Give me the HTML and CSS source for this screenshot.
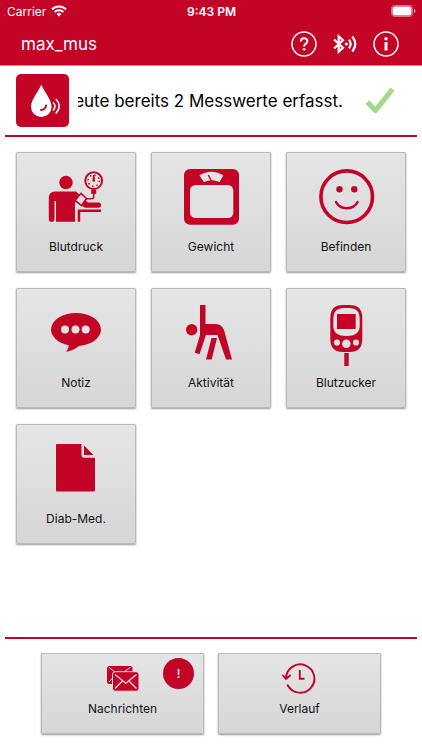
FILE: index.html
```html
<!DOCTYPE html>
<html lang="de">
<head>
<meta charset="utf-8">
<meta name="viewport" content="width=device-width, initial-scale=1">
<title>max_mus</title>
<link rel="stylesheet" href="styles.css">
</head>
<body>
<header class="header">
  <div class="status">
    <div class="carrier">Carrier
      <svg width="16" height="12" viewBox="0 0 16 12" fill="none" stroke="#fff" stroke-width="2"><path d="M1 4.3a10 10 0 0 1 14 0M3.6 7a6.4 6.4 0 0 1 8.8 0"/><path d="M5.6 9a3.5 3.5 0 0 1 4.800 0L8 11.4z" fill="#fff" stroke="none"/></svg>
    </div>
    <div class="clock">9:43 PM</div>
    <div class="battery">
      <svg width="25" height="12" viewBox="0 0 25 12"><rect x=".5" y=".5" width="21" height="11" rx="3" fill="none" stroke="#e0788a"/><rect x="1.500" y="1.500" width="19" height="9" rx="2" fill="#fff"/><path d="M23 4v4q1.500-.6 1.500-2T23 4" fill="#eda0ad"/></svg>
    </div>
  </div>
  <div class="titlebar">
    <h1 class="user">max_mus</h1>
    <button class="tool" aria-label="Hilfe"><svg width="26" height="26" viewBox="0 0 26 26" fill="none" stroke="#fff"><circle cx="13" cy="13" r="12" stroke-width="1.500"/><path d="M9.800 10.500c0-4.300 6.600-4.300 6.600-.3 0 2.500-3.300 2.400-3.300 5.300" stroke-width="2"/><circle cx="13.100" cy="18.300" r="1.300" fill="#fff" stroke="none"/></svg></button>
    <button class="tool" aria-label="Bluetooth"><svg width="26" height="26" viewBox="0 0 26 26" fill="none" stroke="#fff" stroke-width="2.200"><path d="M2 8.500l9 8.300-4.300 4V5.200l4.300 4-9 8.300"/><circle cx="14.300" cy="13" r="1.500" fill="#fff" stroke="none"/><path d="M17 8.800q3.300 4.200 0 8.400M20.300 5.500q6 7.500 0 15"/></svg></button>
    <button class="tool" aria-label="Information"><svg width="26" height="26" viewBox="0 0 26 26" fill="none" stroke="#fff"><circle cx="13" cy="13" r="12" stroke-width="1.500"/><circle cx="13" cy="7.800" r="1.700" fill="#fff" stroke="none"/><path d="M13 11v8.500" stroke-width="3"/></svg></button>
  </div>
</header>

<section class="summary">
  <svg class="drop" width="53" height="53" viewBox="0 0 53 53"><rect width="53" height="53" rx="5" fill="#c30427"/><path d="M25.300 10.500C23 17 15 25.500 15 32.700a10.300 10.300 0 0 0 20.600 0C35.600 25.500 27.600 17 25.300 10.500z" fill="#fff"/><path d="M25 36q4.500-.3 5-4.500" fill="none" stroke="#c30427" stroke-width="2" stroke-linecap="round"/><path d="M37 28.500q4 3.500 0 8M39.800 25q7 7 0 14.500" fill="none" stroke="#fff" stroke-width="1.600"/></svg>
  <p class="ticker">eute bereits 2 Messwerte erfasst.</p>
  <svg class="check" width="30" height="30" viewBox="0 0 30 30" fill="none" stroke="#a5d887" stroke-width="5.200" stroke-linejoin="round"><path d="M2.300 16l8.200 8.500L27.500 3"/></svg>
</section>

<main class="tiles">
  <button class="tile">
    <svg width="60" height="68" viewBox="0 0 60 68" fill="#c30427"><circle cx="20" cy="18.500" r="6.700"/><path d="M9 27.500h21L42 38.500h10.500a2.600 2.600 0 0 1 0 5.200H39L29 37.500V57.700H10V37H8.500V55a2.800 2.800 0 0 1-5.700 0V34q0-6.500 6.200-6.500z"/><path d="M35 29.300l5.500 5.200-5 7-6.300-5.200z" fill="#e0e0e0" stroke="#c30427" stroke-width="1.600"/><path d="M31.700 57.700V45.500H55V48H34.200v9.700z"/><circle cx="47.700" cy="16.700" r="8.400" fill="#e2e2e2" stroke="#c30427" stroke-width="2"/><circle cx="47.700" cy="16.700" r="5.600" fill="none" stroke="#c30427" stroke-width="1.600" stroke-dasharray="1.400 3"/><path d="M47 11h1.500l.6 6.500h-2.700zM45.200 25.500h5V30h-5z"/><path d="M47.700 29v4q0 1.700-2 1.700H40" fill="none" stroke="#c30427" stroke-width="1.500"/></svg>
    <span>Blutdruck</span>
  </button>
  <button class="tile">
    <svg width="60" height="68" viewBox="0 0 60 68" fill="#c30427"><rect x="3" y="5" width="55" height="55.700" rx="6"/><rect x="9" y="21" width="43.300" height="33" rx="5.500" fill="#e1e1e1"/><path d="M18.300 11.500q12-7.500 24 0L38.500 18q-7.800-3.500-15.500 0z" fill="#e3e3e3"/><path d="M27.300 11l3 6" stroke="#c30427" stroke-width="1.400"/></svg>
    <span>Gewicht</span>
  </button>
  <button class="tile">
    <svg width="60" height="68" viewBox="0 0 60 68" fill="none" stroke="#c30427"><circle cx="30.700" cy="32.700" r="25.800" stroke-width="3.600"/><path d="M20 38c4 8.200 17.600 8.200 21.600 0" stroke-width="2.500" stroke-linecap="round"/><g fill="#c30427" stroke="none"><circle cx="23.500" cy="25.300" r="3.200"/><circle cx="38.300" cy="25.300" r="3.200"/></g></svg>
    <span>Befinden</span>
  </button>
  <button class="tile">
    <svg width="60" height="68" viewBox="0 0 60 68" fill="#c30427"><ellipse cx="30" cy="29.500" rx="25" ry="16.500"/><path d="M22.500 43q1 4-2.300 9Q29 50 34 45z"/><g fill="#e3e3e3"><circle cx="19" cy="29.500" r="4"/><circle cx="29.500" cy="29.500" r="4"/><circle cx="39.700" cy="29.500" r="4"/></g></svg>
    <span>Notiz</span>
  </button>
  <button class="tile">
    <svg width="60" height="68" viewBox="0 0 60 68" fill="#c30427"><circle cx="10.700" cy="29.700" r="5.700"/><path d="M19 5h5.500v19H35q5.500 0 8 6L51 59.500h-6L36.500 35H25l-6.500 19.300-4.800-1.500L19 35z"/><path d="M30.500 38H36l-5.300 21.500H25z"/></svg>
    <span>Aktivität</span>
  </button>
  <button class="tile">
    <svg width="60" height="68" viewBox="0 0 60 68" fill="#c30427"><path d="M14.300 18Q14.300 5 27 5h6.600Q46.300 5 46.300 18v21q0 13-12.700 13H27Q14.300 52 14.300 39z"/><path d="M17.300 19Q17.300 8 28 8h5Q43.700 8 43.700 19v7q0 10-13.200 10T17.300 26z" fill="#e2e2e2"/><path d="M21 14h18.700v15H21zM28.300 53h4.400v13h-4.400z"/><g fill="#dfdfdf"><circle cx="21" cy="42.500" r="3.100"/><circle cx="30.300" cy="43.800" r="4.300"/><circle cx="40" cy="42.500" r="3.100"/></g></svg>
    <span>Blutzucker</span>
  </button>
  <button class="tile">
    <svg width="60" height="68" viewBox="0 0 60 68" fill="#c30427"><path d="M11 8h24.500v10.500q0 3.200 3 3.200H49V54.500q0 1-1 1H11q-1 0-1-1V9q0-1 1-1z"/><path d="M38 9.500l9.500 9.500H38z"/></svg>
    <span>Diab-Med.</span>
  </button>
</main>

<footer class="footer">
  <button class="wide">
    <svg width="36" height="34" viewBox="0 0 36 34"><rect x="2" y="6" width="25.500" height="18" rx="2.500" fill="#c30427"/><path d="M4 7.500l6 4.500M4 22l3.500-4M25.500 7.500L20 11" stroke="#dfdfdf"/><rect x="7.500" y="11.700" width="26.500" height="19.500" rx="2.800" fill="#c30427" stroke="#dfdfdf"/><path d="M10 14.500l10.800 8.800L31.500 14.500M10 28.500l7.500-7.500M31.500 28.500L24 21" fill="none" stroke="#e2e2e2" stroke-width="1.200"/></svg>
    <span>Nachrichten</span>
    <b class="badge">!</b>
  </button>
  <button class="wide">
    <svg width="36" height="34" viewBox="0 0 36 34" fill="none" stroke="#c30427" stroke-width="1.900" stroke-linecap="round"><path d="M5.700 25.300A14.200 14.200 0 1 0 4 18.500M1 15.500l3 3.500 4-3.500"/><path d="M17.800 10v8.700h4.700" stroke-linecap="butt"/></svg>
    <span>Verlauf</span>
  </button>
</footer>
</body>
</html>
```
FILE: styles.css
```css
* { box-sizing: border-box; }

body {
  margin: 0;
  min-height: 100vh;
  display: flex;
  flex-direction: column;
  background: #fff;
  color: #111;
  font-family: Inter, "Liberation Sans", sans-serif;
}

button {
  font: inherit;
  color: inherit;
  padding: 0;
}

svg { display: block; flex: none; }

.header {
  background: #c30427;
  color: #fff;
  border-bottom: 1px solid #ef8090;
}

.status {
  display: grid;
  grid-template-columns: 1fr auto 1fr;
  align-items: center;
  height: 22px;
  padding: 0 6px 0 7px;
  font-size: 12px;
}

.carrier { display: flex; align-items: center; gap: 5px; }
.clock { font-weight: 600; }
.battery { justify-self: end; }

.titlebar {
  display: flex;
  align-items: center;
  gap: 15px;
  height: 43px;
  padding: 0 23px 0 21px;
}

.user {
  flex: 1;
  margin: 0;
  font-size: 17px;
  font-weight: 400;
}

.tool { background: none; border: 0; }

.summary {
  display: flex;
  align-items: center;
  margin: 0 5px;
  height: 71px;
  padding: 0 22px 0 11px;
  border-bottom: 2px solid #c30427;
}

.ticker {
  flex: 1;
  min-width: 0;
  display: flex;
  justify-content: flex-end;
  overflow: hidden;
  margin: 0 22px 0 9px;
  font-size: 17px;
  line-height: 24px;
  color: #000;
  white-space: nowrap;
}

.tiles {
  flex: 1;
  display: grid;
  grid-template-columns: repeat(3, 1fr);
  align-content: start;
  gap: 16px 15px;
  padding: 15px 16px;
}

.tile,
.wide {
  display: flex;
  flex-direction: column;
  align-items: center;
  gap: 5px;
  border: 1px solid #b9b9b9;
  border-radius: 1px;
  background: linear-gradient(#e5e5e5, #d6d6d6);
  box-shadow: 0 1px 2px #999;
  font-size: 12px;
  line-height: 20px;
}

.tile { height: 120px; padding-top: 11px; }

.footer {
  display: grid;
  grid-template-columns: 1fr 1fr;
  gap: 14px;
  margin: 0 5px;
  padding: 14px 36px 16px;
  border-top: 2px solid #c30427;
}

.wide {
  position: relative;
  height: 81px;
  padding-top: 6px;
}

.badge {
  position: absolute;
  top: 4px;
  right: 9px;
  width: 31px;
  border-radius: 50%;
  background: #c30427;
  color: #fff;
  font-weight: 500;
  line-height: 31px;
}
```
